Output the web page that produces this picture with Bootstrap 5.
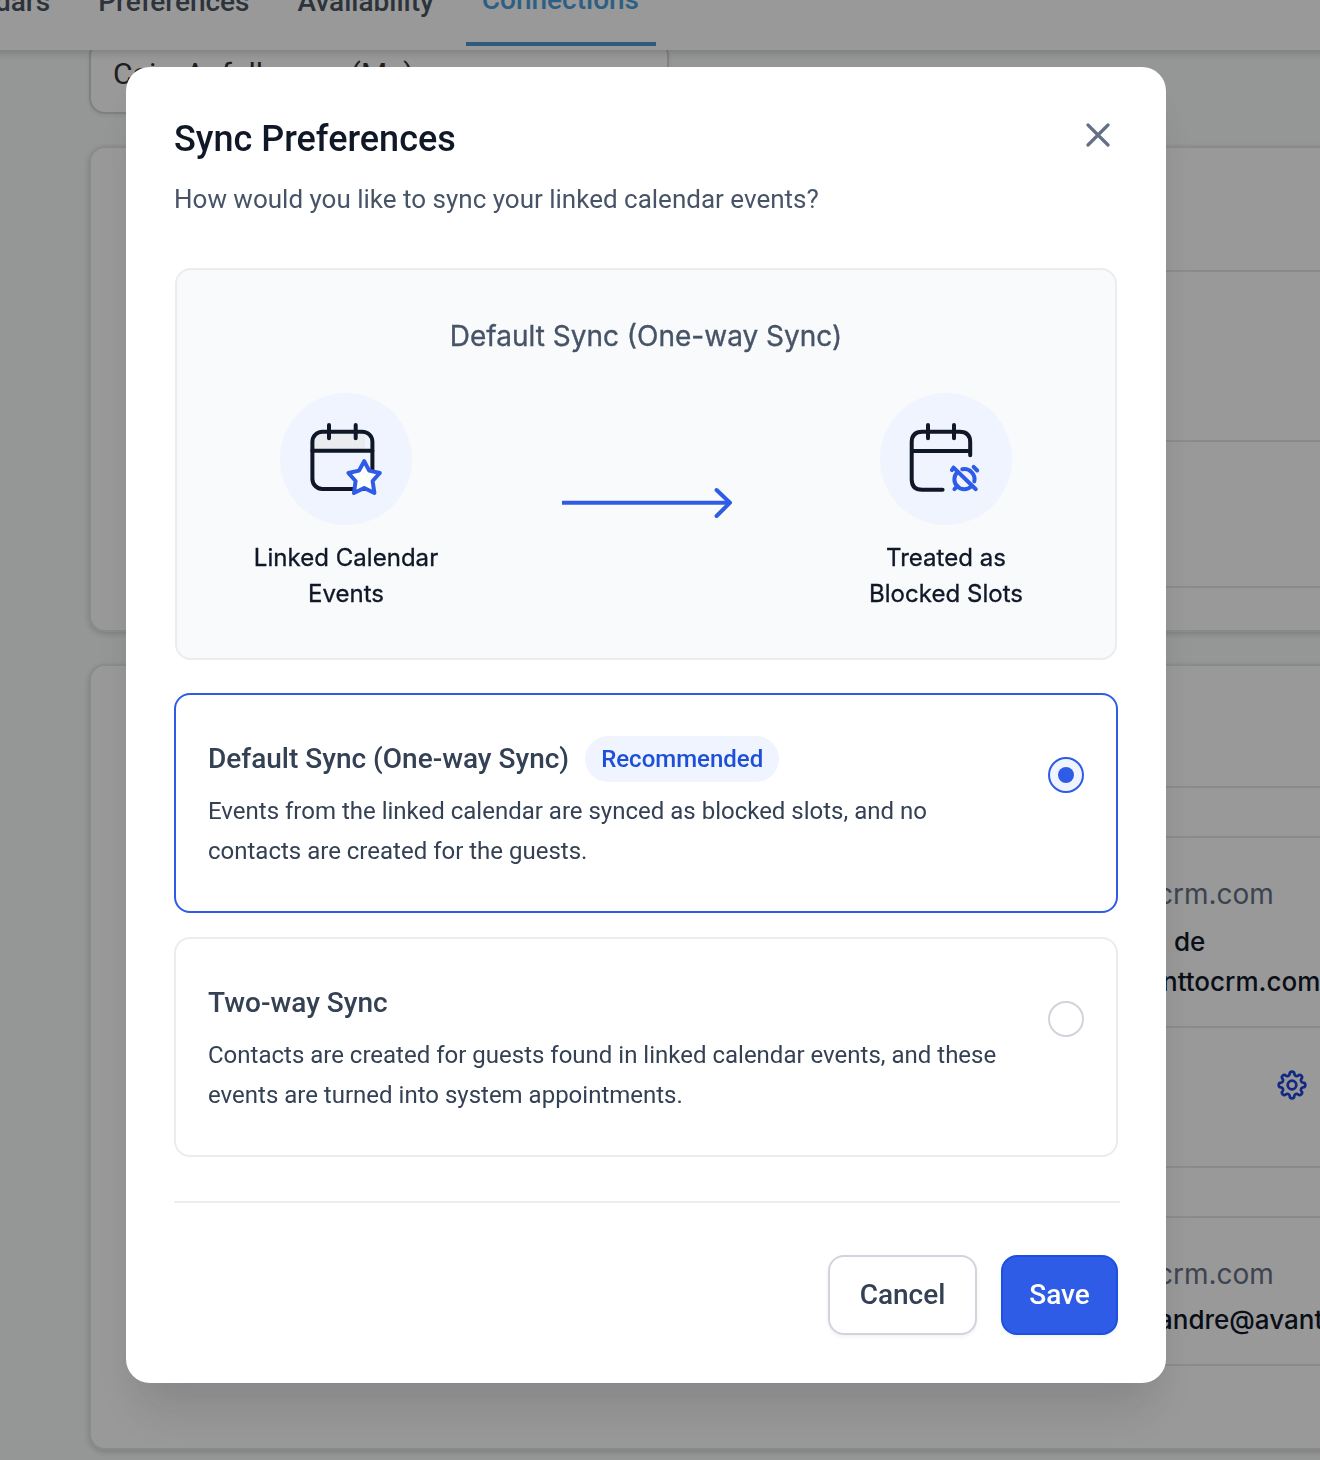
<!DOCTYPE html>
<html lang="en">
<head>
<meta charset="utf-8">
<meta name="viewport" content="width=device-width, initial-scale=1">
<title>Sync Preferences</title>
<link href="https://cdn.jsdelivr.net/npm/bootstrap@5.3.0/dist/css/bootstrap.min.css" rel="stylesheet">
<style>
  html, body { height: 1460px; overflow: hidden; }
  body { font-family: Roboto, "Liberation Sans", sans-serif; background: #f9fcfa; color: #344054; }
  svg { display: block; flex: none; }
  .page { height: 1460px; overflow: hidden; }
  .tabs-bar { height: 50px; background: #fff; box-shadow: 0 2px 10px rgba(0,0,0,.2); position: relative; margin: 0 -30px 0 -39px; padding-left: 18px; gap: 16px; }
  .tabs-bar .nav-link { font-size: 28px; font-weight: 500; line-height: 36px; height: 66px; margin-top: -20px; padding: 4px 16px 0; color: #4b5563; border-bottom: 4px solid transparent; border-radius: 0; white-space: nowrap; }
  .tabs-bar .nav-link.active { color: #4b9fdc; border-color: #4b96d0; padding: 2px 17px 0 16px; }
  .account-field { width: 580px; height: 74px; margin: -10px 0 32px 89px; border: 2px solid #d0d5dd; border-radius: 16px; background: #fff; font-size: 30px; line-height: 40px; letter-spacing: .1px; word-spacing: 4px; padding: 12px 22px; color: #333; box-shadow: 0 2px 4px rgba(16,24,40,.08); }
  .sheet { margin-left: 89px; width: 1300px; background: #fff; border: 2px solid #e4e7ec; border-radius: 16px; box-shadow: 0 2px 6px rgba(16,24,40,.18); font-family: Inter, "Liberation Sans", sans-serif; white-space: nowrap; }
  .sheet > div { border-bottom: 2px solid #e4e7ec; margin-left: 48px; padding-left: 1018px; }
  .sheet > div:last-child { border-bottom: 0; }
  .mail { font-size: 28px; line-height: 40px; color: #667085; }
  .who { font-size: 26px; line-height: 40px; font-weight: 500; color: #101828; margin-left: 1px; }
  .shade { background: rgba(0,0,0,.4); position: fixed; inset: 0; padding: 67px 0 0 126px; }
  .dialog-box { width: 1040px; height: 1316px; background: #fff; border-radius: 24px; padding: 48px; box-shadow: 0 40px 50px -10px rgba(16,24,40,.1), 0 16px 40px -6px rgba(16,24,40,.05); }
  .dialog-title { font-size: 36px; line-height: 48px; font-weight: 500; color: #101828; }
  .close-x { background: none; border: 0; padding: 0; margin: 8px 8px 0 0; }
  .dialog-sub { font-size: 26px; line-height: 40px; color: #475467; margin-top: 16px; }
  .diagram { border: 2px solid #eaecf0; border-radius: 16px; background: #f9fafc; height: 392px; margin: 49px 1px 33px; font-family: Inter, "Liberation Sans", sans-serif; padding: 46px 49px 0; -webkit-text-stroke: .35px currentColor; }
  .diagram-title { font-size: 28px; line-height: 40px; color: #475467; margin-bottom: 37px; }
  .disc { width: 132px; height: 132px; border-radius: 50%; background: #eff4ff; margin: 0 auto 15px; }
  .stop { width: 240px; color: #101828; font-size: 24px; line-height: 36px; letter-spacing: .04px; }
  .flow-arrow { margin-top: 93px; }
  .option { border: 2px solid #eaecf0; border-radius: 16px; height: 220px; padding: 41px 32px; cursor: pointer; }
  .option.chosen { border-color: #2e5ce6; }
  .option-name { font-size: 28px; line-height: 46px; font-weight: 500; }
  .option-text { font-size: 24px; line-height: 40px; margin-top: 9px; }
  .pill { font-size: 24px; line-height: 46px; font-weight: 500; color: #1d4fd8; background: #eff4ff; padding: 0 16px; }
  .dot-ring { width: 36px; height: 36px; border: 2px solid #d0d5dd; border-radius: 50%; margin-top: 21px; }
  .chosen .dot-ring { border-color: #2e5ce6; background: #eff4ff; }
  .chosen .dot-ring::after { content: ""; width: 16px; height: 16px; border-radius: 50%; background: #2e5ce6; }
  .rule { height: 2px; background: #eaecf0; margin: 44px -2px 52px 0; }
  .act { height: 80px; border: 2px solid #d0d5dd; border-radius: 16px; font-size: 28px; font-weight: 500; color: #344054; background: #fff; box-shadow: 0 2px 4px rgba(16,24,40,.06); padding: 0; }
  .act-cancel { width: 149px; }
  .act-save { width: 117px; background: #2e5ce6; border-color: #1d4fe0; color: #fff; }
</style>
</head>
<body>
<div class="page">
  <nav class="tabs-bar nav flex-nowrap">
    <a class="nav-link" href="#">dars</a><a class="nav-link" href="#">Preferences</a><a class="nav-link" href="#">Availability</a><a class="nav-link active" href="#">Connections</a>
  </nav>
  <div class="account-field">Caio Anfalloners (Me)</div>
  <section class="sheet">
    <div style="height:124px"></div><div style="height:170px"></div><div style="height:146px"></div><div style="height:42px"></div>
  </section>
  <section class="sheet" style="margin-top:32px">
    <div style="height:122px"></div>
    <div style="height:50px"></div>
    <div style="height:190px;padding-top:36px"><div class="mail">crm.com</div><div class="who mt-2 ps-3">de</div><div class="who ps-1">nttocrm.com</div></div>
    <div style="height:140px;padding-top:42px">
      <svg style="margin-left:120px" width="30" height="30" viewBox="-15 -15 30 30" fill="none" stroke="#1d45d8" stroke-width="2.7" stroke-linejoin="round"><circle r="4.3"/><path d="M-2.3-11A2.3 2.3 0 0 1 2.3-11A2.4 2.4 0 0 0 6.15-9.4A2.3 2.3 0 0 1 9.4-6.15A2.4 2.4 0 0 0 11-2.3A2.3 2.3 0 0 1 11 2.3A2.4 2.4 0 0 0 9.4 6.15A2.3 2.3 0 0 1 6.15 9.4A2.4 2.4 0 0 0 2.3 11A2.3 2.3 0 0 1-2.3 11A2.4 2.4 0 0 0-6.15 9.4A2.3 2.3 0 0 1-9.4 6.15A2.4 2.4 0 0 0-11 2.3A2.3 2.3 0 0 1-11-2.3A2.4 2.4 0 0 0-9.4-6.15A2.3 2.3 0 0 1-6.15-9.4A2.4 2.4 0 0 0-2.3-11Z"/></svg>
    </div>
    <div style="height:50px"></div>
    <div style="height:148px;padding-top:36px"><div class="mail">crm.com</div><div class="who" style="margin-top:6px">andre@avanttocrm.com</div></div>
    <div style="height:82px"></div>
  </section>
</div>
<div class="shade">
  <div class="dialog-box" role="dialog" aria-label="Sync Preferences">
    <div class="d-flex justify-content-between align-items-start">
      <h1 class="dialog-title mb-0">Sync Preferences</h1>
      <button class="close-x" aria-label="Close"><svg width="24" height="24" viewBox="0 0 24 24" stroke="#667085" stroke-width="3.2" stroke-linecap="round"><path d="M2 2 22 22M22 2 2 22"/></svg></button>
    </div>
    <p class="dialog-sub mb-0">How would you like to sync your linked calendar events?</p>
    <div class="diagram text-center">
      <div class="diagram-title">Default Sync (One-way Sync)</div>
      <div class="d-flex justify-content-between align-items-start">
        <div class="stop">
          <div class="disc"><svg width="132" height="132" fill="none" stroke="#101828" stroke-width="4" stroke-linecap="round" stroke-linejoin="round"><path d="M34 57V46q0-7 8-7H85V57Z" fill="#eaecf0" stroke="none"/><rect x="32.4" y="38.7" width="60" height="57.2" rx="10"/><path d="M32.4 57.7h60M49 32v13.2M75.7 32v13.2"/><path d="M84.2 68.2l5 9.4L99.8 80l-7.2 8 1.8 12-10.2-5-10.2 5 1.6-12-7.2-8 10.6-2.4Z" fill="#fff" stroke="#2e5ce6"/></svg></div>
          Linked Calendar<br>Events
        </div>
        <svg class="flow-arrow" width="172" height="34" fill="none" stroke="#2e5ce6" stroke-width="4"><path d="M2 16.7H170"/><path d="M156.6 4 170 16.7 156.6 30" stroke-linecap="round" stroke-linejoin="round"/></svg>
        <div class="stop">
          <div class="disc"><svg width="132" height="132" fill="none" stroke="#101828" stroke-width="4" stroke-linecap="round" stroke-linejoin="round"><path d="M90.2 62.3V49.2q0-10.5-10.5-10.5H42.2q-10.5 0-10.5 10.5V86.2q0 10.5 10.5 10.5H62.6M31.7 57.9H90.2M48 32v13.2M74 32v13.2"/><g stroke="#2e5ce6"><path d="M73.6 74.6 95.8 96.2M71.9 77.2l1.7-2.6M93.6 73.9l3.6 3.6M74.4 96.2l3.2-3.2"/><path d="M82.3 76.3A10.2 10.2 0 0 1 94.3 88.4M77.2 79.4A9.9 9.9 0 0 0 91.2 93.4"/></g></svg></div>
          Treated as<br>Blocked Slots
        </div>
      </div>
    </div>
    <div class="option chosen d-flex justify-content-between mb-4">
      <div><div class="d-flex gap-3"><span class="option-name">Default Sync (One-way Sync)</span><span class="pill rounded-pill">Recommended</span></div>
      <div class="option-text">Events from the linked calendar are synced as blocked slots, and no<br>contacts are created for the guests.</div></div>
      <span class="dot-ring d-flex align-items-center justify-content-center"></span>
    </div>
    <div class="option d-flex justify-content-between">
      <div><div class="option-name">Two-way Sync</div>
      <div class="option-text">Contacts are created for guests found in linked calendar events, and these<br>events are turned into system appointments.</div></div>
      <span class="dot-ring d-flex"></span>
    </div>
    <div class="rule"></div>
    <div class="d-flex justify-content-end gap-4"><button class="btn act act-cancel">Cancel</button><button class="btn act act-save">Save</button></div>
  </div>
</div>
<script src="https://cdn.jsdelivr.net/npm/bootstrap@5.3.0/dist/js/bootstrap.bundle.min.js"></script>
</body>
</html>
